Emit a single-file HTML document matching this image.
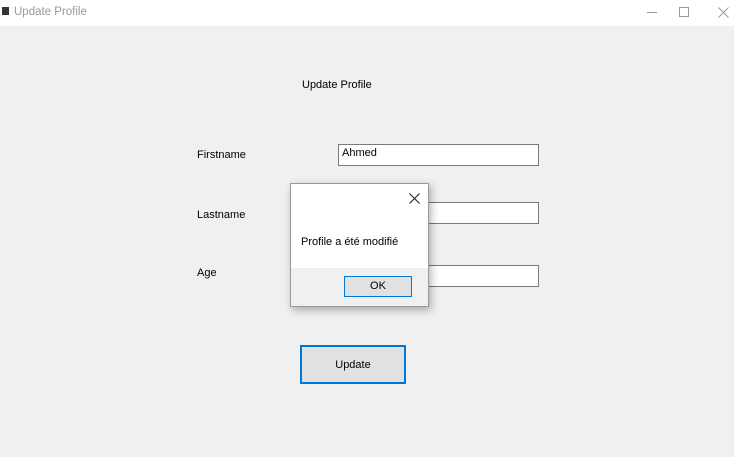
<!DOCTYPE html>
<html><head><meta charset="utf-8"><style>
body{margin:0;width:734px;height:457px;background:#f0f0f0;font-family:"Segoe UI","Liberation Sans",sans-serif;font-size:11px;color:#000;position:relative;overflow:hidden}
.a{position:absolute}
.tb{background:#fff;border:1px solid #7a7a7a;height:19px;box-sizing:border-box;width:201px;left:338px;padding:2px 3px}
</style></head><body>
<div class="a" style="left:0;top:0;width:734px;height:26px;background:#fff"></div>
<div class="a" style="left:2px;top:7px;width:7px;height:8px;background:#333"></div>
<div class="a" style="left:14px;top:6px;font-size:11.5px;color:#999">Update Profile</div>
<div class="a" style="left:647px;top:12px;width:10px;height:1px;background:#999"></div>
<div class="a" style="left:679px;top:7px;width:10px;height:10px;border:1px solid #999;box-sizing:border-box"></div>
<svg class="a" style="left:718px;top:7px" width="11" height="11"><path d="M0.5 0.5L10.5 10.5M10.5 0.5L0.5 10.5" stroke="#999" stroke-width="1"/></svg>

<div class="a" style="left:302px;top:79px">Update Profile</div>
<div class="a" style="left:197px;top:149px">Firstname</div>
<div class="a" style="left:197px;top:209px">Lastname</div>
<div class="a" style="left:197px;top:267px">Age</div>
<div class="a tb" style="top:144px;height:22px">Ahmed</div>
<div class="a tb" style="top:202px;height:22px"></div>
<div class="a tb" style="top:265px;height:22px"></div>

<div class="a" style="left:300px;top:345px;width:106px;height:39px;box-sizing:border-box;border:2px solid #0078d7;background:#e1e1e1;text-align:center;line-height:37px">Update</div>

<div class="a" style="left:290px;top:183px;width:139px;height:124px;box-sizing:border-box;border:1px solid #999;background:#f0f0f0;box-shadow:2px 3px 8px rgba(0,0,0,0.3)">
 <div class="a" style="left:0;top:0;width:137px;height:84px;background:#fff"></div>
 <svg class="a" style="left:118px;top:9px" width="11" height="11"><path d="M0.5 0.5L10.5 10.5M10.5 0.5L0.5 10.5" stroke="#222" stroke-width="1.1"/></svg>
 <div class="a" style="left:10px;top:52px">Profile a été modifié</div>
 <div class="a" style="left:53px;top:92px;width:68px;height:21px;box-sizing:border-box;border:1px solid #0078d7;background:#e1e1e1;text-align:center;line-height:19px">OK</div>
</div>
</body></html>
